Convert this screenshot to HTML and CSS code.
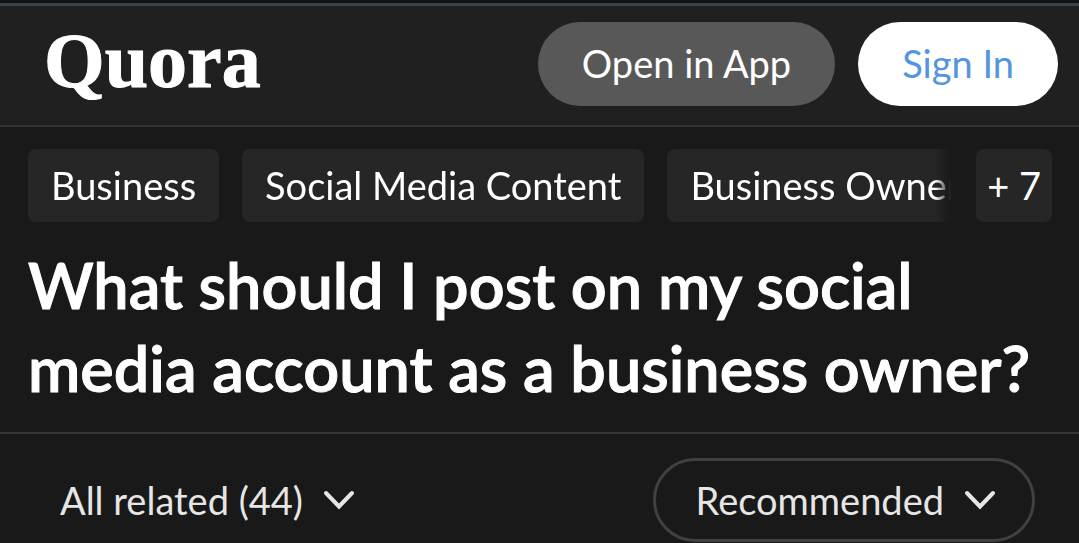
FILE: index.html
```html
<!DOCTYPE html>
<html lang="en">
<head>
<meta charset="utf-8">
<meta name="viewport" content="width=device-width, initial-scale=1">
<title>What should I post on my social media account as a business owner? - Quora</title>
<link rel="stylesheet" href="styles.css">
</head>
<body>
<header class="topbar">
  <a class="logo" href="#">Quora</a>
  <div class="actions">
    <button class="pill pill-app" type="button">Open in App</button>
    <button class="pill pill-sign" type="button">Sign In</button>
  </div>
</header>
<main>
  <section class="question">
    <nav class="topics" aria-label="Topics">
      <div class="topic-list">
        <a class="chip" href="#">Business</a>
        <a class="chip" href="#">Social Media Content</a>
        <a class="chip" href="#">Business Owner</a>
      </div>
      <button class="chip chip-more" type="button">+ 7</button>
    </nav>
    <h1 class="title">What should I post on my social media account as a business owner?</h1>
  </section>
  <section class="filters">
    <button class="filter" type="button">All related (44)
      <svg class="chevron" viewBox="0 0 32 20" aria-hidden="true"><path d="M3 3 16 16.500 29 3"/></svg>
    </button>
    <button class="filter filter-sort" type="button">Recommended
      <svg class="chevron" viewBox="0 0 32 20" aria-hidden="true"><path d="M3 3 16 16.500 29 3"/></svg>
    </button>
  </section>
</main>
</body>
</html>
```
FILE: styles.css
```css
* {
  box-sizing: border-box;
}

body {
  margin: 0;
  background: #191919;
  color: #fff;
  font-family: Lato, "Noto Sans", sans-serif;
  font-size: 38px;
  line-height: 48px;
}

a {
  color: inherit;
  text-decoration: none;
}

button {
  border: 0;
  background: none;
  color: inherit;
  font: inherit;
  white-space: nowrap;
}

.topbar {
  display: flex;
  align-items: center;
  justify-content: space-between;
  padding: 19px 21px 19px 44px;
  border-top: 3px solid #0b1419;
  border-bottom: 2px solid #343434;
  background: #202020;
  box-shadow: inset 0 3px #3c4244;
}

.logo {
  padding-bottom: 6px;
  font-family: "Liberation Serif", serif;
  font-size: 78px;
  font-weight: 700;
  line-height: 76px;
  -webkit-text-stroke: 1px currentColor;
}

.actions {
  display: flex;
  gap: 23px;
}

.pill {
  padding: 17px 44px 19px;
  border-radius: 42px;
}

.pill-app {
  background: #585858;
}

.pill-sign {
  background: #fff;
  color: #5595e0;
}

.question {
  padding: 22px 27px 23px 28px;
  border-bottom: 2px solid #343434;
}

.topics {
  display: flex;
  gap: 25px;
}

.topic-list {
  display: flex;
  flex: 1;
  gap: 23px;
  min-width: 0;
  overflow: hidden;
  -webkit-mask-image: linear-gradient(to left, transparent, #000 16px);
  mask-image: linear-gradient(to left, transparent, #000 16px);
}

.chip {
  flex: none;
  padding: 12px 23px 13px;
  border-radius: 8px;
  background: #262626;
  white-space: nowrap;
}

.chip-more {
  padding: 12px 11px 13px;
}

.title {
  margin: 21px 0 0;
  font-size: 63px;
  font-weight: 600;
  line-height: 83px;
  -webkit-text-stroke: 1px currentColor;
}

.filters {
  display: flex;
  align-items: center;
  justify-content: space-between;
  padding: 24px 44px 0 60px;
  color: #e6e6e6;
}

.filter {
  display: flex;
  align-items: center;
  gap: 20px;
  padding: 0;
}

.filter-sort {
  padding: 15px 36px 15px 40px;
  border: 3px solid #404040;
  border-radius: 42px;
}

.chevron {
  width: 32px;
  height: 20px;
  fill: none;
  stroke: currentColor;
  stroke-width: 4;
  stroke-linecap: round;
}
```
